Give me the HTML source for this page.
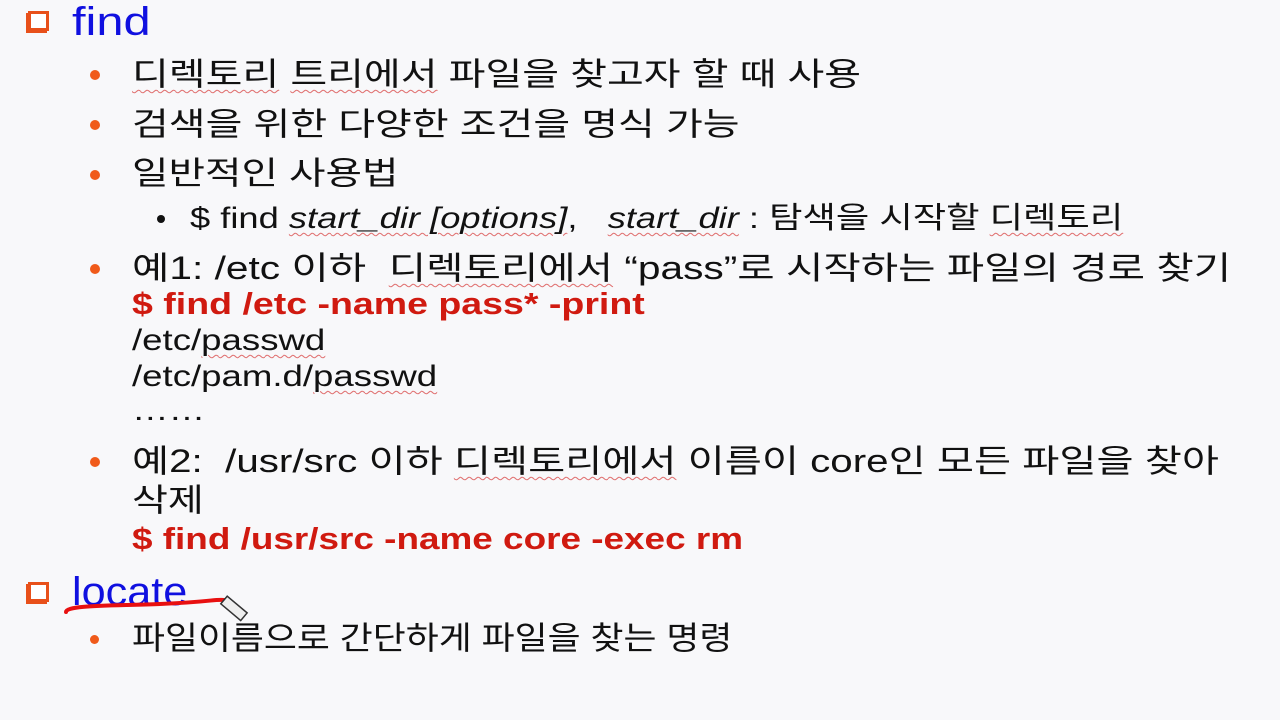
<!DOCTYPE html>
<html><head><meta charset="utf-8"><style>
body{margin:0;width:1280px;height:720px;background:#f8f8fa;overflow:hidden;position:relative;font-family:"Liberation Sans","Noto Sans CJK KR","NanumGothic",sans-serif;color:#111}
.l{position:absolute;white-space:nowrap;line-height:1;transform:scaleX(1.22);transform-origin:0 0}
.b{position:absolute;width:10px;height:10px;border-radius:50%;background:#f05a1a}
.sq{position:absolute;width:21px;height:20px;border:3px solid #e8501a;box-sizing:border-box;box-shadow:-2px 2px 0 #e8501a;background:#fff}
.h{color:#1010e0;font-size:40px}
.k{font-size:32px}
.r{color:#d01a10;font-weight:bold;font-size:31px}
.u{text-decoration:underline wavy #e07070 1px;text-underline-offset:4px}
</style></head><body>
<div class="sq" style="left:28px;top:11px"></div>
<div class="l h" style="left:72px;top:2px">find</div>

<div class="b" style="left:90px;top:70px"></div>
<div class="l k" style="left:132px;top:58px;transform:scaleX(1.25)"><span class="u">디렉토리</span> <span class="u">트리에서</span> 파일을 찾고자 할 때 사용</div>
<div class="b" style="left:90px;top:120px"></div>
<div class="l k" style="left:132px;top:108px;transform:scaleX(1.25)">검색을 위한 다양한 조건을 명식 가능</div>
<div class="b" style="left:90px;top:170px"></div>
<div class="l k" style="left:132px;top:157px;transform:scaleX(1.24)">일반적인 사용법</div>
<div class="b" style="left:157px;top:215px;width:8px;height:8px;background:#111"></div>
<div class="l" style="left:190px;top:204px;font-size:30px;transform:scaleX(1.21)">$ find <i class="u">start_dir [options]</i>,&nbsp;&nbsp; <i class="u">start_dir</i> : 탐색을 시작할 <span class="u">디렉토리</span></div>

<div class="b" style="left:90px;top:264px"></div>
<div class="l k" style="left:132px;top:252px;transform:scaleX(1.27)">예1: /etc 이하&nbsp; <span class="u">디렉토리에서</span> “pass”로 시작하는 파일의 경로 찾기</div>
<div class="l r" style="left:132px;top:288px;transform:scaleX(1.21)">$ find /etc -name pass* -print</div>
<div class="l k" style="left:132px;top:326px;font-size:30px">/etc/<span class="u">passwd</span></div>
<div class="l k" style="left:132px;top:362px;font-size:30px">/etc/pam.d/<span class="u">passwd</span></div>
<div class="l k" style="left:132px;top:396px;font-size:30px">……</div>

<div class="b" style="left:90px;top:457px"></div>
<div class="l k" style="left:132px;top:445px;transform:scaleX(1.26)">예2:&nbsp; /usr/src 이하 <span class="u">디렉토리에서</span> 이름이 core인 모든 파일을 찾아</div>
<div class="l k" style="left:132px;top:484px">삭제</div>
<div class="l r" style="left:132px;top:523px;transform:scaleX(1.19)">$ find /usr/src -name core -exec rm</div>

<div class="sq" style="left:28px;top:582px"></div>
<div class="l h" style="left:72px;top:572px;transform:scaleX(1.08)">locate</div>
<svg style="position:absolute;left:0;top:0" width="1280" height="720"><path d="M66 612 C66 605 110 606 160 604 S215 599 224 600" stroke="#e81010" stroke-width="4" fill="none" stroke-linecap="round"/><g transform="translate(224,600) rotate(40)"><rect x="0" y="-5" width="26" height="10" fill="#eee" stroke="#333" stroke-width="1.5"/></g></svg>
<div class="b" style="left:90px;top:635px;width:9px;height:9px"></div>
<div class="l k" style="left:132px;top:622px;transform:scaleX(1.12)">파일이름으로 간단하게 파일을 찾는 명령</div>
</body></html>
